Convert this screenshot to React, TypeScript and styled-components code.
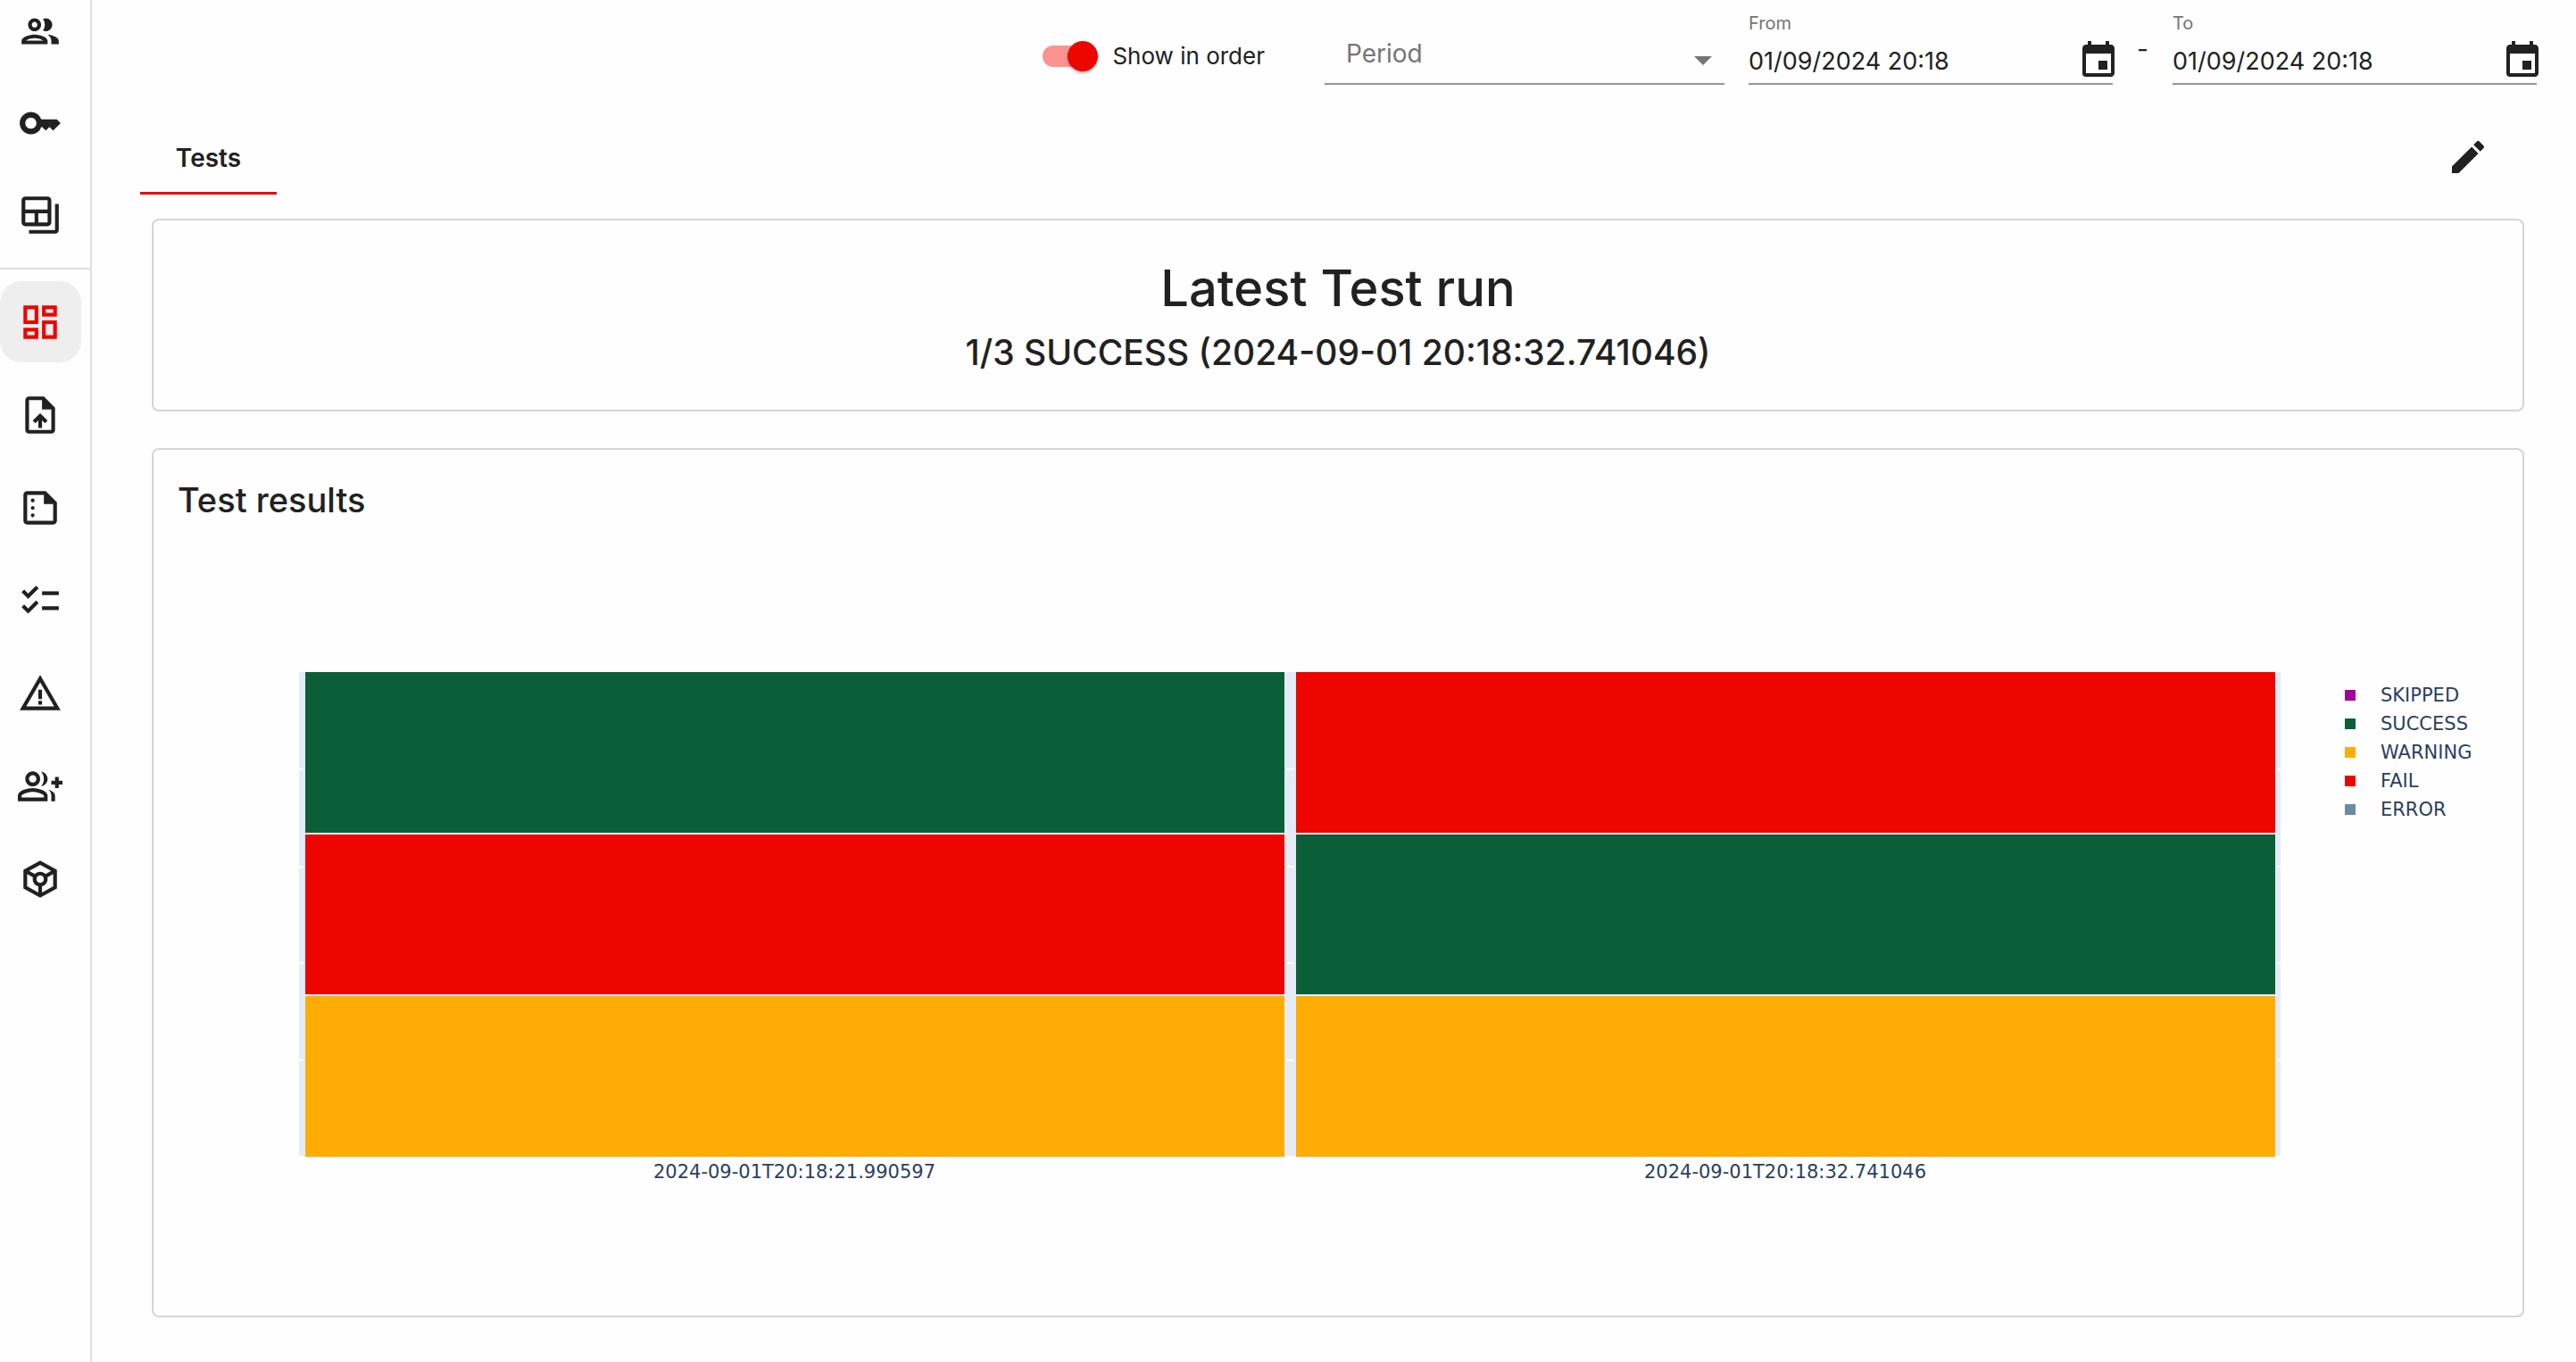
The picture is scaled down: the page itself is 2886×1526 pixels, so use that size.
import React, { useState } from 'react';
import styled, { createGlobalStyle } from 'styled-components';
import {
  MdArrowDropDown,
  MdChecklist,
  MdEdit,
  MdEvent,
  MdKey,
  MdOutlineBackupTable,
  MdOutlineDashboard,
  MdOutlineGroup,
  MdOutlineGroupAdd,
  MdOutlineSummarize,
  MdOutlineToken,
  MdOutlineUploadFile,
  MdWarningAmber,
} from 'react-icons/md';

const color = {
  text: '#212121',
  muted: '#757575',
  line: '#949494',
  border: '#d5d5d5',
  divider: '#e0e0e0',
  primary: '#ed0500',
  plot: '#e5ecf6',
  chartText: '#2a3f5f',
};

const statusColor = {
  SKIPPED: '#a00398',
  SUCCESS: '#0a5f38',
  WARNING: '#ffad04',
  FAIL: '#ed0500',
  ERROR: '#6b8ba4',
};

type Status = keyof typeof statusColor;

const GlobalStyle = createGlobalStyle`
  *, *::before, *::after { box-sizing: border-box; }
  body {
    margin: 0;
    background: #fefefe;
    color: ${color.text};
    font-family: Inter, "Liberation Sans", sans-serif;
    font-size: 28px;
    line-height: 40px;
  }
  button, input, select { font: inherit; color: inherit; }
`;

const Shell = styled.div`
  display: flex;
  min-height: 100vh;
`;

const Sidebar = styled.nav`
  flex: none;
  width: 103px;
  border-right: 2px solid ${color.divider};
`;

const NavGroup = styled.div<{ $scrolled?: boolean }>`
  display: flex;
  flex-direction: column;
  gap: ${(p) => (p.$scrolled ? '12px' : '13px')};
  margin-top: ${(p) => (p.$scrolled ? '-11px' : '0')};
`;

const NavDivider = styled.hr`
  margin: 14px 0 13px;
  border: 0;
  border-top: 2px solid ${color.divider};
`;

const NavLink = styled.a<{ $active?: boolean }>`
  display: flex;
  align-items: center;
  padding-left: 20px;
  width: 91px;
  height: 91px;
  border-radius: 24px;
  background: ${(p) => (p.$active ? '#eeeeee' : 'transparent')};
  color: ${(p) => (p.$active ? color.primary : color.text)};
  font-size: 50px;
`;

const Main = styled.main`
  flex: 1;
  min-width: 0;
  display: flex;
  flex-direction: column;
`;

const Toolbar = styled.header`
  display: flex;
  align-items: flex-end;
  justify-content: flex-end;
  gap: 27px;
  padding: 12px 44px 39px;
`;

const SwitchLabel = styled.label`
  display: flex;
  align-items: center;
  gap: 16px;
  height: 64px;
  margin-right: 40px;
  font-size: 26px;
`;

const SwitchInput = styled.input`
  appearance: none;
  position: relative;
  width: 62px;
  height: 34px;
  margin: 0;

  &::before {
    content: '';
    position: absolute;
    top: 5px;
    left: 0;
    width: 58px;
    height: 24px;
    border-radius: 12px;
    background: #bdbdbd;
  }
  &:checked::before { background: #fa938f; }

  &::after {
    content: '';
    position: absolute;
    top: 0;
    left: 0;
    width: 34px;
    height: 34px;
    border-radius: 50%;
    background: #fafafa;
    box-shadow: 0 2px 3px rgba(0, 0, 0, 0.3);
  }
  &:checked::after { left: 28px; background: ${color.primary}; }
`;

const SelectField = styled.div`
  position: relative;
  width: 448px;
  color: ${color.muted};
`;

const SelectInput = styled.select`
  appearance: none;
  display: block;
  width: 100%;
  height: 68px;
  padding: 0 48px 0 24px;
  border: 0;
  border-bottom: 2px solid ${color.line};
  border-radius: 0;
  background: transparent;
`;

const SelectArrow = styled(MdArrowDropDown)`
  position: absolute;
  right: 0;
  bottom: 4px;
  font-size: 48px;
  pointer-events: none;
`;

const DateGroup = styled.div`
  width: 408px;
`;

const DateLabel = styled.label`
  display: block;
  color: ${color.muted};
  font-size: 20px;
  line-height: 28px;
`;

const DateRow = styled.div`
  display: flex;
  align-items: center;
  padding: 4px 0 1px;
  border-bottom: 2px solid ${color.line};
`;

const DateInput = styled.input`
  flex: 1;
  min-width: 0;
  height: 48px;
  padding: 0;
  border: 0;
  background: transparent;
  font-size: 27px;
`;

const IconButton = styled.button`
  display: flex;
  padding: 0;
  border: 0;
  background: transparent;
  font-size: 48px;
`;

const CalendarButton = styled(IconButton)`
  margin-right: -8px;
`;

const RangeDash = styled.span`
  width: 13px;
  height: 60px;
  text-align: center;
`;

const TabRow = styled.div`
  display: flex;
  align-items: center;
  justify-content: space-between;
  padding: 0 97px 0 54px;
`;

const Tab = styled.button`
  width: 153px;
  height: 84px;
  padding: 4px 0 0;
  border: 0;
  border-bottom: 3px solid ${color.primary};
  background: transparent;
  font-size: 28px;
  font-weight: 600;
`;

const Panels = styled.div`
  display: flex;
  flex-direction: column;
  gap: 41px;
  padding: 27px 58px 50px 67px;
`;

const Card = styled.section`
  border: 2px solid ${color.border};
  border-radius: 8px;
`;

const SummaryCard = styled(Card)`
  padding: 40px 28px 32px;
  text-align: center;
`;

const SummaryTitle = styled.h1`
  margin: 0;
  font-size: 56px;
  font-weight: 500;
  line-height: 72px;
`;

const SummaryText = styled.p`
  margin: 0;
  padding: 8px 0 4px;
  font-size: 39px;
  font-weight: 500;
  line-height: 56px;
`;

const ResultsTitle = styled.h2`
  margin: 0;
  padding: 28px 27px 0;
  font-size: 38px;
  font-weight: 500;
  line-height: 56px;
`;

const Chart = styled.div`
  display: flex;
  gap: 72px;
  padding: 165px 0 148px 163px;
`;

const PlotColumn = styled.div`
  flex: 1;
  min-width: 0;
`;

const Plot = styled.div`
  position: relative;
  display: flex;
  gap: 13px;
  height: 544px;
  padding: 0 6px 1px 7px;
  background: ${color.plot};
`;

const GridLines = styled.div`
  position: absolute;
  inset: 2px 0 0;
  display: grid;
  grid-template-rows: repeat(5, 1fr);
`;

const GridLine = styled.div`
  border-bottom: 2px solid #ffffff;
`;

const Stack = styled.div`
  position: relative;
  flex: 1;
  display: flex;
  flex-direction: column;
  gap: 2px;
  background: ${color.plot};
  box-shadow: -2px 0 ${color.plot}, 2px 0 ${color.plot}, 0 1px ${color.plot};
`;

const Segment = styled.div<{ $status: Status }>`
  flex: 1;
  background: ${(p) => statusColor[p.$status]};
`;

const AxisLabels = styled.div`
  display: flex;
  padding-top: 3px;
`;

const AxisLabel = styled.span`
  flex: 1;
  color: ${color.chartText};
  font-family: Verdana, "DejaVu Sans", sans-serif;
  font-size: 21px;
  line-height: 26px;
  text-align: center;
`;

const Legend = styled.ul`
  flex: none;
  width: 199px;
  margin: 0;
  padding: 10px 0 0;
  list-style: none;
`;

const LegendItem = styled.li<{ $status: Status }>`
  display: flex;
  align-items: center;
  gap: 28px;
  color: ${color.chartText};
  font-family: Verdana, "DejaVu Sans", sans-serif;
  font-size: 21px;
  line-height: 32px;

  &::before {
    content: '';
    width: 12px;
    height: 12px;
    background: ${(p) => statusColor[p.$status]};
  }
`;

const adminLinks = [
  { label: 'Teams', Icon: MdOutlineGroup },
  { label: 'Tokens', Icon: MdKey },
  { label: 'Projects', Icon: MdOutlineBackupTable },
];

const projectLinks = [
  { label: 'Dashboard', Icon: MdOutlineDashboard },
  { label: 'Upload', Icon: MdOutlineUploadFile },
  { label: 'Reports', Icon: MdOutlineSummarize },
  { label: 'Test suites', Icon: MdChecklist },
  { label: 'Alerts', Icon: MdWarningAmber },
  { label: 'Members', Icon: MdOutlineGroupAdd },
  { label: 'Datasets', Icon: MdOutlineToken },
];

const runs: { time: string; results: Status[] }[] = [
  { time: '2024-09-01T20:18:21.990597', results: ['SUCCESS', 'FAIL', 'WARNING'] },
  { time: '2024-09-01T20:18:32.741046', results: ['FAIL', 'SUCCESS', 'WARNING'] },
];

function DateField({ id, label }: { id: string; label: string }) {
  const [value, setValue] = useState('01/09/2024 20:18');
  return (
    <DateGroup>
      <DateLabel htmlFor={id}>{label}</DateLabel>
      <DateRow>
        <DateInput id={id} type="text" value={value} onChange={(e) => setValue(e.target.value)} />
        <CalendarButton type="button" aria-label="Choose date">
          <MdEvent />
        </CalendarButton>
      </DateRow>
    </DateGroup>
  );
}

export default function App() {
  const [ordered, setOrdered] = useState(true);
  return (
    <>
      <GlobalStyle />
      <Shell>
        <Sidebar>
          <NavGroup $scrolled>
            {adminLinks.map(({ label, Icon }) => (
              <NavLink key={label} href="#" aria-label={label}>
                <Icon />
              </NavLink>
            ))}
          </NavGroup>
          <NavDivider />
          <NavGroup>
            {projectLinks.map(({ label, Icon }, i) => (
              <NavLink key={label} href="#" aria-label={label} $active={i === 0}>
                <Icon />
              </NavLink>
            ))}
          </NavGroup>
        </Sidebar>
        <Main>
          <Toolbar>
            <SwitchLabel>
              <SwitchInput
                type="checkbox"
                role="switch"
                checked={ordered}
                onChange={(e) => setOrdered(e.target.checked)}
              />
              Show in order
            </SwitchLabel>
            <SelectField>
              <SelectInput aria-label="Period">
                <option>Period</option>
              </SelectInput>
              <SelectArrow />
            </SelectField>
            <DateField id="from" label="From" />
            <RangeDash>-</RangeDash>
            <DateField id="to" label="To" />
          </Toolbar>
          <TabRow>
            <Tab type="button">Tests</Tab>
            <IconButton type="button" aria-label="Edit">
              <MdEdit />
            </IconButton>
          </TabRow>
          <Panels>
            <SummaryCard>
              <SummaryTitle>Latest Test run</SummaryTitle>
              <SummaryText>1/3 SUCCESS (2024-09-01 20:18:32.741046)</SummaryText>
            </SummaryCard>
            <Card>
              <ResultsTitle>Test results</ResultsTitle>
              <Chart>
                <PlotColumn>
                  <Plot>
                    <GridLines>
                      {[0, 1, 2, 3, 4].map((n) => (
                        <GridLine key={n} />
                      ))}
                    </GridLines>
                    {runs.map((run) => (
                      <Stack key={run.time}>
                        {run.results.map((status) => (
                          <Segment key={status} $status={status} />
                        ))}
                      </Stack>
                    ))}
                  </Plot>
                  <AxisLabels>
                    {runs.map((run) => (
                      <AxisLabel key={run.time}>{run.time}</AxisLabel>
                    ))}
                  </AxisLabels>
                </PlotColumn>
                <Legend>
                  {(Object.keys(statusColor) as Status[]).map((status) => (
                    <LegendItem key={status} $status={status}>
                      {status}
                    </LegendItem>
                  ))}
                </Legend>
              </Chart>
            </Card>
          </Panels>
        </Main>
      </Shell>
    </>
  );
}
